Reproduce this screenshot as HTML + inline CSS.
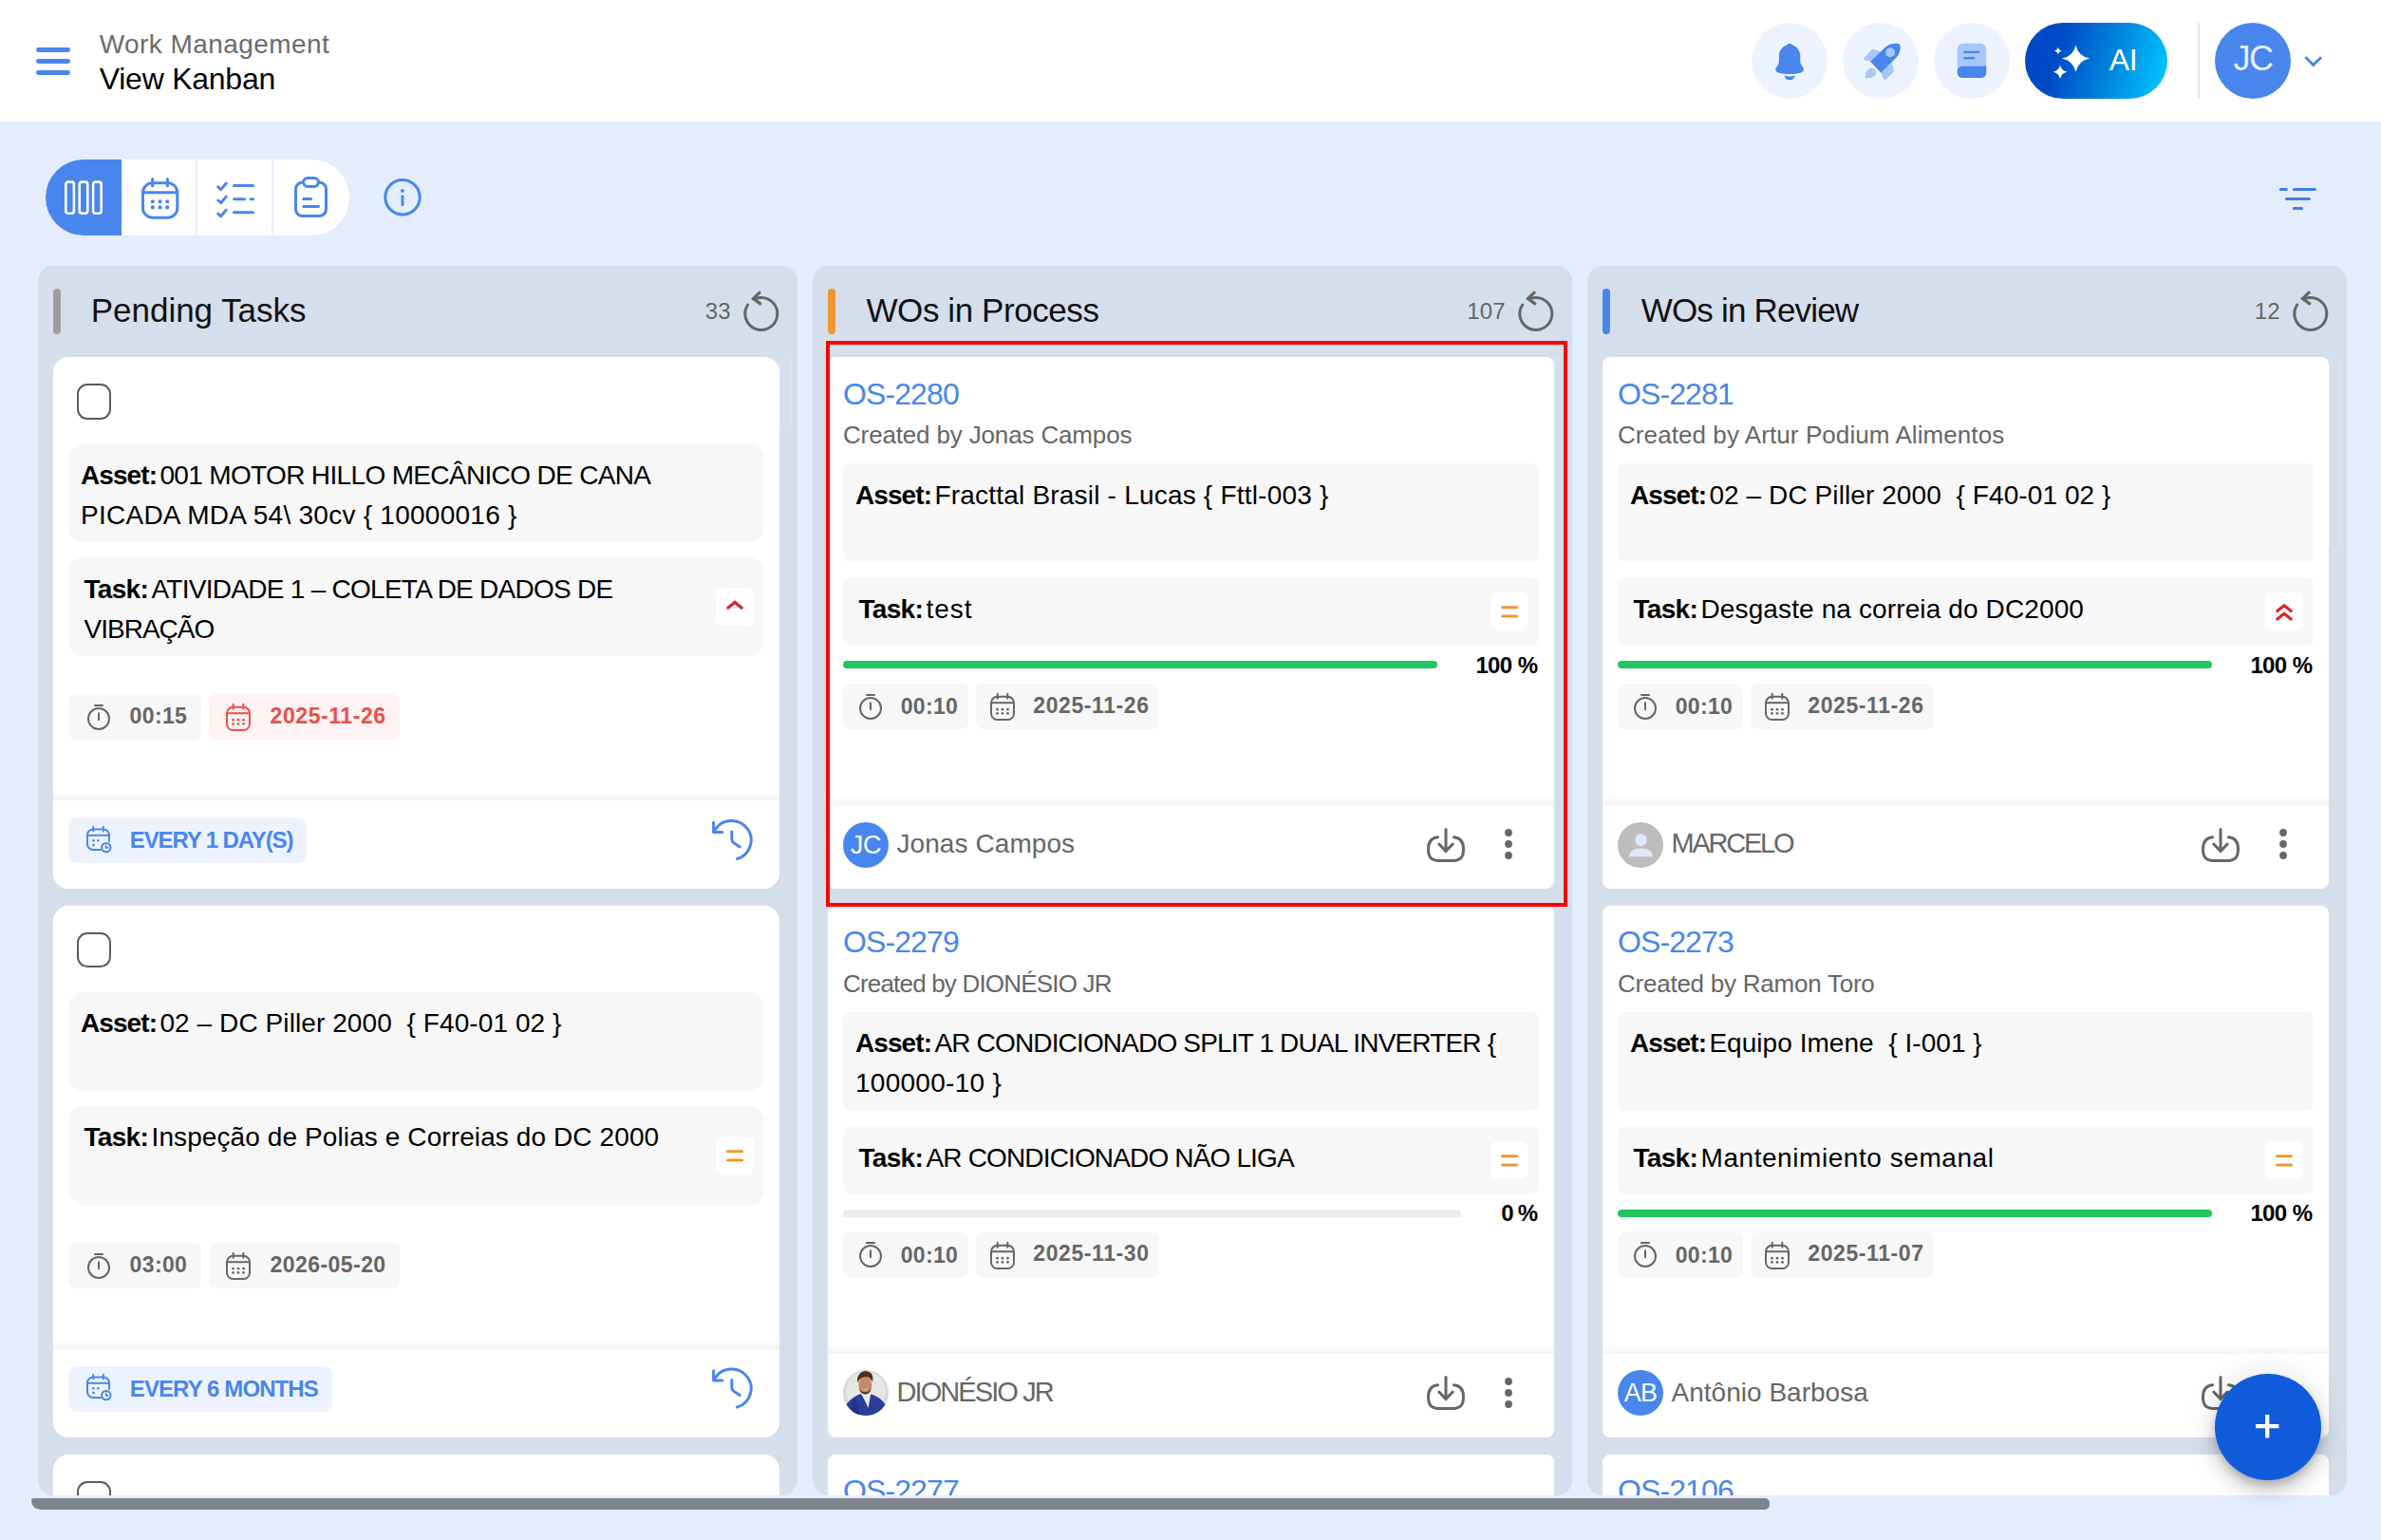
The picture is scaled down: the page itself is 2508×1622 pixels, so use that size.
<!DOCTYPE html>
<html lang="en"><head><meta charset="utf-8"><title>View Kanban</title>
<style>
html,body{margin:0;padding:0}
body{width:2508px;height:1622px;overflow:hidden;position:relative;background:#e4edfd;font-family:"Liberation Sans", Arimo, Arial, Helvetica, sans-serif;-webkit-font-smoothing:antialiased}
</style></head><body>
<div style="position:absolute;left:0;top:0;width:2508px;height:1574.5px;overflow:hidden"><div style="position:absolute;left:40px;top:280px;width:800px;height:1294.5px;background:#d5dfec;border-radius:16px"></div><div style="position:absolute;left:856px;top:280px;width:800px;height:1294.5px;background:#d5dfec;border-radius:16px"></div><div style="position:absolute;left:1672px;top:280px;width:800px;height:1294.5px;background:#d5dfec;border-radius:16px"></div><div style="position:absolute;left:56px;top:304px;width:8px;height:48px;background:#9e9e9e;border-radius:4px;"></div><span style="position:absolute;left:95.70px;top:305.20px;font-size:35px;line-height:44px;letter-spacing:-0.013px;color:#111;white-space:pre;">Pending Tasks</span><span style="position:absolute;right:1738.36px;top:312.70px;font-size:24px;line-height:30px;letter-spacing:0.141px;color:#666;white-space:pre;">33</span><svg style="position:absolute;left:0px;top:0px;overflow:visible;" width="10" height="10" viewBox="0 0 10 10" fill="none"><path d="M800.8 313.5 A17 17 0 1 1 787.71 320.99" stroke="#666" stroke-width="3" stroke-linecap="round"/><path d="M800.0999999999999 308.1 L793.5 314.5 L800.8 319.9" stroke="#666" stroke-width="3.200" stroke-linecap="round" stroke-linejoin="miter"/><path d="M793.5 314.5 L800.8 313.5" stroke="#666" stroke-width="3" stroke-linecap="round"/></svg><div style="position:absolute;left:872px;top:304px;width:8px;height:48px;background:#f0982f;border-radius:4px;"></div><span style="position:absolute;left:912.50px;top:305.20px;font-size:35px;line-height:44px;letter-spacing:-0.423px;color:#111;white-space:pre;">WOs in Process</span><span style="position:absolute;right:922.36px;top:312.70px;font-size:24px;line-height:30px;letter-spacing:0.141px;color:#666;white-space:pre;">107</span><svg style="position:absolute;left:0px;top:0px;overflow:visible;" width="10" height="10" viewBox="0 0 10 10" fill="none"><path d="M1616.8 313.5 A17 17 0 1 1 1603.71 320.99" stroke="#666" stroke-width="3" stroke-linecap="round"/><path d="M1616.1 308.1 L1609.5 314.5 L1616.8 319.9" stroke="#666" stroke-width="3.200" stroke-linecap="round" stroke-linejoin="miter"/><path d="M1609.5 314.5 L1616.8 313.5" stroke="#666" stroke-width="3" stroke-linecap="round"/></svg><div style="position:absolute;left:1688px;top:304px;width:8px;height:48px;background:#4886ee;border-radius:4px;"></div><span style="position:absolute;left:1728.70px;top:305.20px;font-size:35px;line-height:44px;letter-spacing:-0.814px;color:#111;white-space:pre;">WOs in Review</span><span style="position:absolute;right:106.36px;top:312.70px;font-size:24px;line-height:30px;letter-spacing:0.141px;color:#666;white-space:pre;">12</span><svg style="position:absolute;left:0px;top:0px;overflow:visible;" width="10" height="10" viewBox="0 0 10 10" fill="none"><path d="M2432.8 313.5 A17 17 0 1 1 2419.71 320.99" stroke="#666" stroke-width="3" stroke-linecap="round"/><path d="M2432.1000000000004 308.1 L2425.5 314.5 L2432.8 319.9" stroke="#666" stroke-width="3.200" stroke-linecap="round" stroke-linejoin="miter"/><path d="M2425.5 314.5 L2432.8 313.5" stroke="#666" stroke-width="3" stroke-linecap="round"/></svg><div style="position:absolute;left:56px;top:376px;width:764.500px;height:560px;background:#fff;border-radius:16px"></div><div style="position:absolute;left:81.4px;top:404px;width:31.600px;height:33.600px;border:2.300px solid #5c5c5c;border-radius:11px"></div><div style="position:absolute;left:72px;top:467px;width:732.5px;height:104px;background:#f7f7f7;border-radius:16px;"></div><span style="position:absolute;left:85.00px;top:482.80px;font-size:28px;line-height:35px;letter-spacing:-0.922px;color:#000;font-weight:bold;white-space:pre;">Asset:</span><span style="position:absolute;left:168.40px;top:482.80px;font-size:28px;line-height:35px;letter-spacing:-0.652px;color:#000;white-space:pre;">001 MOTOR HILLO MECÂNICO DE CANA</span><span style="position:absolute;left:85.00px;top:524.80px;font-size:28px;line-height:35px;letter-spacing:0.257px;color:#000;white-space:pre;">PICADA MDA 54\ 30cv { 10000016 }</span><div style="position:absolute;left:72px;top:587px;width:732.5px;height:104px;background:#f7f7f7;border-radius:16px;"></div><span style="position:absolute;left:88.50px;top:602.70px;font-size:28px;line-height:35px;letter-spacing:-0.713px;color:#000;font-weight:bold;white-space:pre;">Task:</span><span style="position:absolute;left:159.50px;top:602.70px;font-size:28px;line-height:35px;letter-spacing:-0.727px;color:#000;white-space:pre;">ATIVIDADE 1 – COLETA DE DADOS DE</span><span style="position:absolute;left:88.50px;top:644.70px;font-size:28px;line-height:35px;letter-spacing:-0.994px;color:#000;white-space:pre;">VIBRAÇÃO</span><div style="position:absolute;left:753.8px;top:619px;width:40px;height:40px;background:#fff;border-radius:8px;"></div><svg style="position:absolute;left:753.8px;top:619px;overflow:visible;" width="40" height="40" viewBox="0 0 40 40" fill="none"><path d="M12.800 21.300L20 15.400L27.200 21.300" stroke="#d7282f" stroke-width="3.200" stroke-linecap="round" stroke-linejoin="miter"/></svg><div style="position:absolute;left:72px;top:731px;width:139.5px;height:48px;background:#f7f7f7;border-radius:8px;"></div><svg style="position:absolute;left:92px;top:742px;overflow:visible;" width="24" height="27" viewBox="0 0 24 27" fill="none"><circle cx="12" cy="15" r="11" stroke="#666" stroke-width="2"/><path d="M8 1H16" stroke="#666" stroke-width="2" stroke-linecap="round"/><path d="M12 9.300V16.300" stroke="#666" stroke-width="2" stroke-linecap="round"/></svg><span style="position:absolute;left:136.60px;top:740.30px;font-size:23px;line-height:29px;letter-spacing:0.374px;color:#666;font-weight:bold;white-space:pre;">00:15</span><div style="position:absolute;left:219.70000000000002px;top:731px;width:201.0px;height:48px;background:#fff2f2;border-radius:8px;"></div><svg style="position:absolute;left:238.4px;top:741px;overflow:visible;" width="26" height="29" viewBox="0 0 26 29" fill="none"><rect x="1" y="3.800" width="24" height="24.200" rx="6.500" stroke="#e94f4f" stroke-width="2"/><path d="M7.700 .8V5.800M18.300 .8V5.800" stroke="#e94f4f" stroke-width="2" stroke-linecap="round"/><path d="M1 10.200H25" stroke="#e94f4f" stroke-width="2"/><circle cx="7.5" cy="17.2" r="1.350" fill="#e94f4f"/><circle cx="13" cy="17.2" r="1.350" fill="#e94f4f"/><circle cx="18.5" cy="17.2" r="1.350" fill="#e94f4f"/><circle cx="7.5" cy="21.4" r="1.350" fill="#e94f4f"/><circle cx="13" cy="21.4" r="1.350" fill="#e94f4f"/><circle cx="18.5" cy="21.4" r="1.350" fill="#e94f4f"/></svg><span style="position:absolute;left:284.60px;top:740.30px;font-size:23px;line-height:29px;letter-spacing:0.561px;color:#e94f4f;font-weight:bold;white-space:pre;">2025-11-26</span><div style="position:absolute;left:56px;top:832px;width:764.5px;height:11px;background:linear-gradient(to bottom,rgba(0,0,0,0),rgba(0,0,0,0.012) 40%,rgba(0,0,0,0.048))"></div><div style="position:absolute;left:72px;top:861px;width:251.0px;height:48px;background:#edf3fe;border-radius:9px;"></div><svg style="position:absolute;left:90.8px;top:869.8px;overflow:visible;" width="26" height="28" viewBox="0 0 26 28" fill="none"><path d="M24 16V9.500a6 6 0 0 0-6-6H7a6 6 0 0 0-6 6V19a6 6 0 0 0 6 6h8" stroke="#4886ee" stroke-width="2" stroke-linecap="round"/><path d="M7.200 .8V5.500M17.800 .8V5.500" stroke="#4886ee" stroke-width="2" stroke-linecap="round"/><path d="M1 9.800H24" stroke="#4886ee" stroke-width="2"/><circle cx="7.500" cy="15.300" r="1.300" fill="#4886ee"/><circle cx="12.300" cy="15.300" r="1.300" fill="#4886ee"/><circle cx="7.500" cy="20" r="1.300" fill="#4886ee"/><circle cx="20.800" cy="22.600" r="4.700" stroke="#4886ee" stroke-width="2"/><path d="M20.600 20.400V22.900H22.800" stroke="#4886ee" stroke-width="1.600" stroke-linecap="round" stroke-linejoin="round"/></svg><span style="position:absolute;left:136.80px;top:870.30px;font-size:24px;line-height:30px;letter-spacing:-1.121px;color:#4886ee;font-weight:bold;white-space:pre;">EVERY 1 DAY(S)</span><svg style="position:absolute;left:0px;top:0px;overflow:visible;" width="10" height="10" viewBox="0 0 10 10" fill="none"><path d="M753.0 874.5 A20.5 20.5 0 1 1 776.4 904.5999999999999" stroke="#4886ee" stroke-width="3" stroke-linecap="round"/><path d="M751.5999999999999 866.3 V876.5 H760.9" stroke="#4886ee" stroke-width="3" stroke-linecap="round" stroke-linejoin="round"/><path d="M770.8 875.9 V884.0999999999999 Q770.8 886.4 772.8 887.6999999999999 L779.3 892.0" stroke="#4886ee" stroke-width="3" stroke-linecap="round" stroke-linejoin="round"/></svg><div style="position:absolute;left:56px;top:953.5px;width:764.500px;height:560px;background:#fff;border-radius:16px"></div><div style="position:absolute;left:81.4px;top:981.5px;width:31.600px;height:33.600px;border:2.300px solid #5c5c5c;border-radius:11px"></div><div style="position:absolute;left:72px;top:1044.5px;width:732.5px;height:104px;background:#f7f7f7;border-radius:16px;"></div><span style="position:absolute;left:85.00px;top:1060.30px;font-size:28px;line-height:35px;letter-spacing:-0.922px;color:#000;font-weight:bold;white-space:pre;">Asset:</span><span style="position:absolute;left:168.40px;top:1060.30px;font-size:28px;line-height:35px;letter-spacing:0.085px;color:#000;white-space:pre;">02 – DC Piller 2000  { F40-01 02 }</span><div style="position:absolute;left:72px;top:1164.5px;width:732.5px;height:104px;background:#f7f7f7;border-radius:16px;"></div><span style="position:absolute;left:88.50px;top:1180.20px;font-size:28px;line-height:35px;letter-spacing:-0.713px;color:#000;font-weight:bold;white-space:pre;">Task:</span><span style="position:absolute;left:159.50px;top:1180.20px;font-size:28px;line-height:35px;letter-spacing:0.100px;color:#000;white-space:pre;">Inspeção de Polias e Correias do DC 2000</span><div style="position:absolute;left:753.8px;top:1196.5px;width:40px;height:40px;background:#fff;border-radius:8px;"></div><svg style="position:absolute;left:753.8px;top:1196.5px;overflow:visible;" width="40" height="40" viewBox="0 0 40 40" fill="none"><path d="M12.500 15.800H27.500M12.500 25H27.500" stroke="#f0962e" stroke-width="3" stroke-linecap="round"/></svg><div style="position:absolute;left:72px;top:1308.5px;width:139.5px;height:48px;background:#f7f7f7;border-radius:8px;"></div><svg style="position:absolute;left:92px;top:1319.5px;overflow:visible;" width="24" height="27" viewBox="0 0 24 27" fill="none"><circle cx="12" cy="15" r="11" stroke="#666" stroke-width="2"/><path d="M8 1H16" stroke="#666" stroke-width="2" stroke-linecap="round"/><path d="M12 9.300V16.300" stroke="#666" stroke-width="2" stroke-linecap="round"/></svg><span style="position:absolute;left:136.60px;top:1317.80px;font-size:23px;line-height:29px;letter-spacing:0.374px;color:#666;font-weight:bold;white-space:pre;">03:00</span><div style="position:absolute;left:219.70000000000002px;top:1308.5px;width:201.0px;height:48px;background:#f7f7f7;border-radius:8px;"></div><svg style="position:absolute;left:238.4px;top:1318.5px;overflow:visible;" width="26" height="29" viewBox="0 0 26 29" fill="none"><rect x="1" y="3.800" width="24" height="24.200" rx="6.500" stroke="#666" stroke-width="2"/><path d="M7.700 .8V5.800M18.300 .8V5.800" stroke="#666" stroke-width="2" stroke-linecap="round"/><path d="M1 10.200H25" stroke="#666" stroke-width="2"/><circle cx="7.5" cy="17.2" r="1.350" fill="#666"/><circle cx="13" cy="17.2" r="1.350" fill="#666"/><circle cx="18.5" cy="17.2" r="1.350" fill="#666"/><circle cx="7.5" cy="21.4" r="1.350" fill="#666"/><circle cx="13" cy="21.4" r="1.350" fill="#666"/><circle cx="18.5" cy="21.4" r="1.350" fill="#666"/></svg><span style="position:absolute;left:284.60px;top:1317.80px;font-size:23px;line-height:29px;letter-spacing:0.434px;color:#666;font-weight:bold;white-space:pre;">2026-05-20</span><div style="position:absolute;left:56px;top:1409.5px;width:764.5px;height:11px;background:linear-gradient(to bottom,rgba(0,0,0,0),rgba(0,0,0,0.012) 40%,rgba(0,0,0,0.048))"></div><div style="position:absolute;left:72px;top:1438.5px;width:277.5px;height:48px;background:#edf3fe;border-radius:9px;"></div><svg style="position:absolute;left:90.8px;top:1447.3px;overflow:visible;" width="26" height="28" viewBox="0 0 26 28" fill="none"><path d="M24 16V9.500a6 6 0 0 0-6-6H7a6 6 0 0 0-6 6V19a6 6 0 0 0 6 6h8" stroke="#4886ee" stroke-width="2" stroke-linecap="round"/><path d="M7.200 .8V5.500M17.800 .8V5.500" stroke="#4886ee" stroke-width="2" stroke-linecap="round"/><path d="M1 9.800H24" stroke="#4886ee" stroke-width="2"/><circle cx="7.500" cy="15.300" r="1.300" fill="#4886ee"/><circle cx="12.300" cy="15.300" r="1.300" fill="#4886ee"/><circle cx="7.500" cy="20" r="1.300" fill="#4886ee"/><circle cx="20.800" cy="22.600" r="4.700" stroke="#4886ee" stroke-width="2"/><path d="M20.600 20.400V22.900H22.800" stroke="#4886ee" stroke-width="1.600" stroke-linecap="round" stroke-linejoin="round"/></svg><span style="position:absolute;left:136.80px;top:1447.80px;font-size:24px;line-height:30px;letter-spacing:-0.901px;color:#4886ee;font-weight:bold;white-space:pre;">EVERY 6 MONTHS</span><svg style="position:absolute;left:0px;top:0px;overflow:visible;" width="10" height="10" viewBox="0 0 10 10" fill="none"><path d="M753.0 1452.0 A20.5 20.5 0 1 1 776.4 1482.1" stroke="#4886ee" stroke-width="3" stroke-linecap="round"/><path d="M751.5999999999999 1443.8 V1454.0 H760.9" stroke="#4886ee" stroke-width="3" stroke-linecap="round" stroke-linejoin="round"/><path d="M770.8 1453.3999999999999 V1461.6 Q770.8 1463.8999999999999 772.8 1465.2 L779.3 1469.5" stroke="#4886ee" stroke-width="3" stroke-linecap="round" stroke-linejoin="round"/></svg><div style="position:absolute;left:56px;top:1531.5px;width:764.500px;height:560px;background:#fff;border-radius:16px"></div><div style="position:absolute;left:81.4px;top:1559.5px;width:31.600px;height:33.600px;border:2.300px solid #5c5c5c;border-radius:11px"></div><div style="position:absolute;left:72px;top:1622.5px;width:732.5px;height:104px;background:#f7f7f7;border-radius:16px;"></div><span style="position:absolute;left:85.00px;top:1638.30px;font-size:28px;line-height:35px;letter-spacing:-0.922px;color:#000;font-weight:bold;white-space:pre;">Asset:</span><span style="position:absolute;left:168.40px;top:1638.30px;font-size:28px;line-height:35px;letter-spacing:-1.218px;color:#000;white-space:pre;">-</span><div style="position:absolute;left:72px;top:1742.5px;width:732.5px;height:104px;background:#f7f7f7;border-radius:16px;"></div><span style="position:absolute;left:88.50px;top:1758.20px;font-size:28px;line-height:35px;letter-spacing:-0.713px;color:#000;font-weight:bold;white-space:pre;">Task:</span><span style="position:absolute;left:159.50px;top:1758.20px;font-size:28px;line-height:35px;letter-spacing:-1.218px;color:#000;white-space:pre;">-</span><div style="position:absolute;left:753.8px;top:1774.5px;width:40px;height:40px;background:#fff;border-radius:8px;"></div><svg style="position:absolute;left:753.8px;top:1774.5px;overflow:visible;" width="40" height="40" viewBox="0 0 40 40" fill="none"><path d="M12.500 15.800H27.500M12.500 25H27.500" stroke="#f0962e" stroke-width="3" stroke-linecap="round"/></svg><div style="position:absolute;left:72px;top:1886.5px;width:139.5px;height:48px;background:#f7f7f7;border-radius:8px;"></div><svg style="position:absolute;left:92px;top:1897.5px;overflow:visible;" width="24" height="27" viewBox="0 0 24 27" fill="none"><circle cx="12" cy="15" r="11" stroke="#666" stroke-width="2"/><path d="M8 1H16" stroke="#666" stroke-width="2" stroke-linecap="round"/><path d="M12 9.300V16.300" stroke="#666" stroke-width="2" stroke-linecap="round"/></svg><span style="position:absolute;left:136.60px;top:1895.80px;font-size:23px;line-height:29px;letter-spacing:0.374px;color:#666;font-weight:bold;white-space:pre;">00:10</span><div style="position:absolute;left:219.70000000000002px;top:1886.5px;width:201.0px;height:48px;background:#f7f7f7;border-radius:8px;"></div><svg style="position:absolute;left:238.4px;top:1896.5px;overflow:visible;" width="26" height="29" viewBox="0 0 26 29" fill="none"><rect x="1" y="3.800" width="24" height="24.200" rx="6.500" stroke="#666" stroke-width="2"/><path d="M7.700 .8V5.800M18.300 .8V5.800" stroke="#666" stroke-width="2" stroke-linecap="round"/><path d="M1 10.200H25" stroke="#666" stroke-width="2"/><circle cx="7.5" cy="17.2" r="1.350" fill="#666"/><circle cx="13" cy="17.2" r="1.350" fill="#666"/><circle cx="18.5" cy="17.2" r="1.350" fill="#666"/><circle cx="7.5" cy="21.4" r="1.350" fill="#666"/><circle cx="13" cy="21.4" r="1.350" fill="#666"/><circle cx="18.5" cy="21.4" r="1.350" fill="#666"/></svg><span style="position:absolute;left:284.60px;top:1895.80px;font-size:23px;line-height:29px;letter-spacing:0.434px;color:#666;font-weight:bold;white-space:pre;">2026-01-01</span><div style="position:absolute;left:56px;top:1987.5px;width:764.5px;height:11px;background:linear-gradient(to bottom,rgba(0,0,0,0),rgba(0,0,0,0.012) 40%,rgba(0,0,0,0.048))"></div><div style="position:absolute;left:72px;top:2016.5px;width:251.0px;height:48px;background:#edf3fe;border-radius:9px;"></div><svg style="position:absolute;left:90.8px;top:2025.3px;overflow:visible;" width="26" height="28" viewBox="0 0 26 28" fill="none"><path d="M24 16V9.500a6 6 0 0 0-6-6H7a6 6 0 0 0-6 6V19a6 6 0 0 0 6 6h8" stroke="#4886ee" stroke-width="2" stroke-linecap="round"/><path d="M7.200 .8V5.500M17.800 .8V5.500" stroke="#4886ee" stroke-width="2" stroke-linecap="round"/><path d="M1 9.800H24" stroke="#4886ee" stroke-width="2"/><circle cx="7.500" cy="15.300" r="1.300" fill="#4886ee"/><circle cx="12.300" cy="15.300" r="1.300" fill="#4886ee"/><circle cx="7.500" cy="20" r="1.300" fill="#4886ee"/><circle cx="20.800" cy="22.600" r="4.700" stroke="#4886ee" stroke-width="2"/><path d="M20.600 20.400V22.900H22.800" stroke="#4886ee" stroke-width="1.600" stroke-linecap="round" stroke-linejoin="round"/></svg><span style="position:absolute;left:136.80px;top:2025.80px;font-size:24px;line-height:30px;letter-spacing:-1.121px;color:#4886ee;font-weight:bold;white-space:pre;">EVERY 1 DAY(S)</span><svg style="position:absolute;left:0px;top:0px;overflow:visible;" width="10" height="10" viewBox="0 0 10 10" fill="none"><path d="M753.0 2030.0 A20.5 20.5 0 1 1 776.4 2060.1" stroke="#4886ee" stroke-width="3" stroke-linecap="round"/><path d="M751.5999999999999 2021.8 V2032.0 H760.9" stroke="#4886ee" stroke-width="3" stroke-linecap="round" stroke-linejoin="round"/><path d="M770.8 2031.3999999999999 V2039.6 Q770.8 2041.8999999999999 772.8 2043.2 L779.3 2047.5" stroke="#4886ee" stroke-width="3" stroke-linecap="round" stroke-linejoin="round"/></svg><div style="position:absolute;left:872px;top:376px;width:764.500px;height:560px;background:#fff;border-radius:8px"></div><span style="position:absolute;left:888.00px;top:394.90px;font-size:32px;line-height:40px;letter-spacing:-0.897px;color:#4886ee;white-space:pre;">OS-2280</span><span style="position:absolute;left:888.00px;top:442.10px;font-size:26px;line-height:32px;letter-spacing:-0.154px;color:#666;white-space:pre;">Created by Jonas Campos</span><div style="position:absolute;left:888px;top:488px;width:732.5px;height:104px;background:#f7f7f7;border-radius:8px;"></div><span style="position:absolute;left:901.00px;top:503.70px;font-size:28px;line-height:35px;letter-spacing:-0.922px;color:#000;font-weight:bold;white-space:pre;">Asset:</span><span style="position:absolute;left:984.40px;top:503.70px;font-size:28px;line-height:35px;letter-spacing:0.206px;color:#000;white-space:pre;">Fracttal Brasil - Lucas { Fttl-003 }</span><div style="position:absolute;left:888px;top:608px;width:732.5px;height:72px;background:#f7f7f7;border-radius:8px;"></div><span style="position:absolute;left:904.50px;top:624.00px;font-size:28px;line-height:35px;letter-spacing:-0.713px;color:#000;font-weight:bold;white-space:pre;">Task:</span><span style="position:absolute;left:975.50px;top:624.00px;font-size:28px;line-height:35px;letter-spacing:0.981px;color:#000;white-space:pre;">test</span><div style="position:absolute;left:1569.5px;top:624px;width:40px;height:40px;background:#fff;border-radius:8px;"></div><svg style="position:absolute;left:1569.5px;top:624px;overflow:visible;" width="40" height="40" viewBox="0 0 40 40" fill="none"><path d="M12.500 15.800H27.500M12.500 25H27.500" stroke="#f0962e" stroke-width="3" stroke-linecap="round"/></svg><div style="position:absolute;left:888px;top:696px;width:625.5px;height:8px;background:#22c55e;border-radius:4px;"></div><span style="position:absolute;right:888.61px;top:685.70px;font-size:24px;line-height:30px;letter-spacing:-0.609px;color:#000;font-weight:bold;white-space:pre;">100 %</span><div style="position:absolute;left:888px;top:720px;width:131.5px;height:48px;background:#f7f7f7;border-radius:8px;"></div><svg style="position:absolute;left:904.7px;top:730.6px;overflow:visible;" width="24" height="27" viewBox="0 0 24 27" fill="none"><circle cx="12" cy="15" r="11" stroke="#666" stroke-width="2"/><path d="M8 1H16" stroke="#666" stroke-width="2" stroke-linecap="round"/><path d="M12 9.300V16.300" stroke="#666" stroke-width="2" stroke-linecap="round"/></svg><span style="position:absolute;left:948.70px;top:730.10px;font-size:23px;line-height:29px;letter-spacing:0.334px;color:#666;font-weight:bold;white-space:pre;">00:10</span><div style="position:absolute;left:1027.5px;top:720px;width:193.5px;height:48px;background:#f7f7f7;border-radius:8px;"></div><svg style="position:absolute;left:1043.3px;top:730px;overflow:visible;" width="26" height="29" viewBox="0 0 26 29" fill="none"><rect x="1" y="3.800" width="24" height="24.200" rx="6.500" stroke="#666" stroke-width="2"/><path d="M7.700 .8V5.800M18.300 .8V5.800" stroke="#666" stroke-width="2" stroke-linecap="round"/><path d="M1 10.200H25" stroke="#666" stroke-width="2"/><circle cx="7.5" cy="17.2" r="1.350" fill="#666"/><circle cx="13" cy="17.2" r="1.350" fill="#666"/><circle cx="18.5" cy="17.2" r="1.350" fill="#666"/><circle cx="7.5" cy="21.4" r="1.350" fill="#666"/><circle cx="13" cy="21.4" r="1.350" fill="#666"/><circle cx="18.5" cy="21.4" r="1.350" fill="#666"/></svg><span style="position:absolute;left:1088.30px;top:728.50px;font-size:23px;line-height:29px;letter-spacing:0.591px;color:#666;font-weight:bold;white-space:pre;">2025-11-26</span><div style="position:absolute;left:872px;top:837px;width:764.5px;height:11px;background:linear-gradient(to bottom,rgba(0,0,0,0),rgba(0,0,0,0.012) 40%,rgba(0,0,0,0.048))"></div><div style="position:absolute;left:888px;top:865.5px;width:48px;height:48px;border-radius:50%;background:#4886ee"></div><span style="position:absolute;left:895.76px;top:872.90px;font-size:27px;line-height:34px;letter-spacing:-0.258px;color:#fff;white-space:pre;">JC</span><span style="position:absolute;left:944.50px;top:871.20px;font-size:28px;line-height:35px;letter-spacing:0.076px;color:#666;white-space:pre;">Jonas Campos</span><svg style="position:absolute;left:1503.2px;top:871.5px;overflow:visible;" width="40" height="36" viewBox="0 0 40 36" fill="none"><path d="M11.500 9.800C4.500 10.300 1.500 14.300 1.500 22.500C1.500 31.300 5 34.500 14 34.500H26C35 34.500 38.500 31.300 38.500 22.500C38.500 14.300 35.500 10.300 28.500 9.800" stroke="#666" stroke-width="3" stroke-linecap="round"/><path d="M20 1.500V24.500M12.800 17L20 24.500L27.200 17" stroke="#666" stroke-width="3" stroke-linecap="round" stroke-linejoin="miter"/></svg><svg style="position:absolute;left:1584.9px;top:873.4px;overflow:visible;" width="8" height="32" viewBox="0 0 8 32" fill="none"><circle cx="4" cy="4" r="3.900" fill="#666"/><circle cx="4" cy="16" r="3.900" fill="#666"/><circle cx="4" cy="28" r="3.900" fill="#666"/></svg><div style="position:absolute;left:872px;top:953.5px;width:764.500px;height:560px;background:#fff;border-radius:8px"></div><span style="position:absolute;left:888.00px;top:972.40px;font-size:32px;line-height:40px;letter-spacing:-0.897px;color:#4886ee;white-space:pre;">OS-2279</span><span style="position:absolute;left:888.00px;top:1019.60px;font-size:26px;line-height:32px;letter-spacing:-0.815px;color:#666;white-space:pre;">Created by DIONÉSIO JR</span><div style="position:absolute;left:888px;top:1065.5px;width:732.5px;height:104px;background:#f7f7f7;border-radius:8px;"></div><span style="position:absolute;left:901.00px;top:1081.20px;font-size:28px;line-height:35px;letter-spacing:-0.922px;color:#000;font-weight:bold;white-space:pre;">Asset:</span><span style="position:absolute;left:984.40px;top:1081.20px;font-size:28px;line-height:35px;letter-spacing:-0.836px;color:#000;white-space:pre;">AR CONDICIONADO SPLIT 1 DUAL INVERTER {</span><span style="position:absolute;left:901.00px;top:1123.20px;font-size:28px;line-height:35px;letter-spacing:0.271px;color:#000;white-space:pre;">100000-10 }</span><div style="position:absolute;left:888px;top:1185.5px;width:732.5px;height:72px;background:#f7f7f7;border-radius:8px;"></div><span style="position:absolute;left:904.50px;top:1201.50px;font-size:28px;line-height:35px;letter-spacing:-0.713px;color:#000;font-weight:bold;white-space:pre;">Task:</span><span style="position:absolute;left:975.50px;top:1201.50px;font-size:28px;line-height:35px;letter-spacing:-0.846px;color:#000;white-space:pre;">AR CONDICIONADO NÃO LIGA</span><div style="position:absolute;left:1569.5px;top:1201.5px;width:40px;height:40px;background:#fff;border-radius:8px;"></div><svg style="position:absolute;left:1569.5px;top:1201.5px;overflow:visible;" width="40" height="40" viewBox="0 0 40 40" fill="none"><path d="M12.500 15.800H27.500M12.500 25H27.500" stroke="#f0962e" stroke-width="3" stroke-linecap="round"/></svg><div style="position:absolute;left:888px;top:1273.5px;width:651px;height:8px;background:#ebebeb;border-radius:4px;"></div><span style="position:absolute;right:889.29px;top:1263.20px;font-size:24px;line-height:30px;letter-spacing:-1.292px;color:#000;font-weight:bold;white-space:pre;">0 %</span><div style="position:absolute;left:888px;top:1297.5px;width:131.5px;height:48px;background:#f7f7f7;border-radius:8px;"></div><svg style="position:absolute;left:904.7px;top:1308.1px;overflow:visible;" width="24" height="27" viewBox="0 0 24 27" fill="none"><circle cx="12" cy="15" r="11" stroke="#666" stroke-width="2"/><path d="M8 1H16" stroke="#666" stroke-width="2" stroke-linecap="round"/><path d="M12 9.300V16.300" stroke="#666" stroke-width="2" stroke-linecap="round"/></svg><span style="position:absolute;left:948.70px;top:1307.60px;font-size:23px;line-height:29px;letter-spacing:0.334px;color:#666;font-weight:bold;white-space:pre;">00:10</span><div style="position:absolute;left:1027.5px;top:1297.5px;width:193.5px;height:48px;background:#f7f7f7;border-radius:8px;"></div><svg style="position:absolute;left:1043.3px;top:1307.5px;overflow:visible;" width="26" height="29" viewBox="0 0 26 29" fill="none"><rect x="1" y="3.800" width="24" height="24.200" rx="6.500" stroke="#666" stroke-width="2"/><path d="M7.700 .8V5.800M18.300 .8V5.800" stroke="#666" stroke-width="2" stroke-linecap="round"/><path d="M1 10.200H25" stroke="#666" stroke-width="2"/><circle cx="7.5" cy="17.2" r="1.350" fill="#666"/><circle cx="13" cy="17.2" r="1.350" fill="#666"/><circle cx="18.5" cy="17.2" r="1.350" fill="#666"/><circle cx="7.5" cy="21.4" r="1.350" fill="#666"/><circle cx="13" cy="21.4" r="1.350" fill="#666"/><circle cx="18.5" cy="21.4" r="1.350" fill="#666"/></svg><span style="position:absolute;left:1088.30px;top:1306.00px;font-size:23px;line-height:29px;letter-spacing:0.591px;color:#666;font-weight:bold;white-space:pre;">2025-11-30</span><div style="position:absolute;left:872px;top:1414.5px;width:764.5px;height:11px;background:linear-gradient(to bottom,rgba(0,0,0,0),rgba(0,0,0,0.012) 40%,rgba(0,0,0,0.048))"></div><div style="position:absolute;left:888px;top:1443.0px;width:48px;height:48px;border-radius:50%;overflow:hidden"><svg width="48" height="48" viewBox="0 0 48 48" style="display:block"><rect width="48" height="48" fill="#d5dad9"/><ellipse cx="24" cy="22" rx="21" ry="20" fill="#e3e7e6"/><path d="M1 41C5 32 12 27.500 19 25L23.500 31L29.500 25.500C38 28 44 33 48 43V48H0Z" fill="#2a3c9c"/><path d="M12 30C15 36 17 42 17.500 48H9C8 42 9 35 12 30Z" fill="#223184"/><path d="M18.800 24.500L23.600 33.500L26.500 40L29.200 25.500L26.500 22H20.500Z" fill="#e8ecf1"/><ellipse cx="23.300" cy="15.500" rx="7" ry="8.800" fill="#c8896a"/><path d="M15.200 13.500C13.800 5.500 19.500 .3 25 1.200C30.300 2 32.600 6.500 30.900 12.800C29.800 8.600 27 6.800 23 7.200C19 7.600 16.500 9.800 15.200 13.500Z" fill="#4e311d"/><path d="M16.800 18.500C18.500 24.800 28 24.800 29.900 18.500C29.300 22.800 27 25.600 23.400 25.600S17.500 22.800 16.800 18.500Z" fill="#5f3a24"/><path d="M20.500 20.200Q23.500 22.500 26.600 20.200Q23.500 21.100 20.500 20.200Z" fill="#fff"/></svg></div><span style="position:absolute;left:944.50px;top:1447.70px;font-size:29px;line-height:36px;letter-spacing:-1.911px;color:#666;white-space:pre;">DIONÉSIO JR</span><svg style="position:absolute;left:1503.2px;top:1449.0px;overflow:visible;" width="40" height="36" viewBox="0 0 40 36" fill="none"><path d="M11.500 9.800C4.500 10.300 1.500 14.300 1.500 22.500C1.500 31.300 5 34.500 14 34.500H26C35 34.500 38.500 31.300 38.500 22.500C38.500 14.300 35.500 10.300 28.500 9.800" stroke="#666" stroke-width="3" stroke-linecap="round"/><path d="M20 1.500V24.500M12.800 17L20 24.500L27.200 17" stroke="#666" stroke-width="3" stroke-linecap="round" stroke-linejoin="miter"/></svg><svg style="position:absolute;left:1584.9px;top:1450.9px;overflow:visible;" width="8" height="32" viewBox="0 0 8 32" fill="none"><circle cx="4" cy="4" r="3.900" fill="#666"/><circle cx="4" cy="16" r="3.900" fill="#666"/><circle cx="4" cy="28" r="3.900" fill="#666"/></svg><div style="position:absolute;left:872px;top:1531.5px;width:764.500px;height:560px;background:#fff;border-radius:8px"></div><span style="position:absolute;left:888.00px;top:1550.40px;font-size:32px;line-height:40px;letter-spacing:-0.897px;color:#4886ee;white-space:pre;">OS-2277</span><span style="position:absolute;left:888.00px;top:1597.60px;font-size:26px;line-height:32px;letter-spacing:-0.154px;color:#666;white-space:pre;">Created by Jonas Campos</span><div style="position:absolute;left:888px;top:1643.5px;width:732.5px;height:104px;background:#f7f7f7;border-radius:8px;"></div><span style="position:absolute;left:901.00px;top:1659.20px;font-size:28px;line-height:35px;letter-spacing:-0.922px;color:#000;font-weight:bold;white-space:pre;">Asset:</span><span style="position:absolute;left:984.40px;top:1659.20px;font-size:28px;line-height:35px;letter-spacing:-1.218px;color:#000;white-space:pre;">-</span><div style="position:absolute;left:888px;top:1763.5px;width:732.5px;height:72px;background:#f7f7f7;border-radius:8px;"></div><span style="position:absolute;left:904.50px;top:1779.50px;font-size:28px;line-height:35px;letter-spacing:-0.713px;color:#000;font-weight:bold;white-space:pre;">Task:</span><span style="position:absolute;left:975.50px;top:1779.50px;font-size:28px;line-height:35px;letter-spacing:-1.218px;color:#000;white-space:pre;">-</span><div style="position:absolute;left:1569.5px;top:1779.5px;width:40px;height:40px;background:#fff;border-radius:8px;"></div><svg style="position:absolute;left:1569.5px;top:1779.5px;overflow:visible;" width="40" height="40" viewBox="0 0 40 40" fill="none"><path d="M12.500 15.800H27.500M12.500 25H27.500" stroke="#f0962e" stroke-width="3" stroke-linecap="round"/></svg><div style="position:absolute;left:888px;top:1851.5px;width:651px;height:8px;background:#ebebeb;border-radius:4px;"></div><span style="position:absolute;right:889.29px;top:1841.20px;font-size:24px;line-height:30px;letter-spacing:-1.292px;color:#000;font-weight:bold;white-space:pre;">0 %</span><div style="position:absolute;left:888px;top:1875.5px;width:131.5px;height:48px;background:#f7f7f7;border-radius:8px;"></div><svg style="position:absolute;left:904.7px;top:1886.1px;overflow:visible;" width="24" height="27" viewBox="0 0 24 27" fill="none"><circle cx="12" cy="15" r="11" stroke="#666" stroke-width="2"/><path d="M8 1H16" stroke="#666" stroke-width="2" stroke-linecap="round"/><path d="M12 9.300V16.300" stroke="#666" stroke-width="2" stroke-linecap="round"/></svg><span style="position:absolute;left:948.70px;top:1885.60px;font-size:23px;line-height:29px;letter-spacing:0.334px;color:#666;font-weight:bold;white-space:pre;">00:10</span><div style="position:absolute;left:1027.5px;top:1875.5px;width:193.5px;height:48px;background:#f7f7f7;border-radius:8px;"></div><svg style="position:absolute;left:1043.3px;top:1885.5px;overflow:visible;" width="26" height="29" viewBox="0 0 26 29" fill="none"><rect x="1" y="3.800" width="24" height="24.200" rx="6.500" stroke="#666" stroke-width="2"/><path d="M7.700 .8V5.800M18.300 .8V5.800" stroke="#666" stroke-width="2" stroke-linecap="round"/><path d="M1 10.200H25" stroke="#666" stroke-width="2"/><circle cx="7.5" cy="17.2" r="1.350" fill="#666"/><circle cx="13" cy="17.2" r="1.350" fill="#666"/><circle cx="18.5" cy="17.2" r="1.350" fill="#666"/><circle cx="7.5" cy="21.4" r="1.350" fill="#666"/><circle cx="13" cy="21.4" r="1.350" fill="#666"/><circle cx="18.5" cy="21.4" r="1.350" fill="#666"/></svg><span style="position:absolute;left:1088.30px;top:1884.00px;font-size:23px;line-height:29px;letter-spacing:0.591px;color:#666;font-weight:bold;white-space:pre;">2025-11-30</span><div style="position:absolute;left:872px;top:1992.5px;width:764.5px;height:11px;background:linear-gradient(to bottom,rgba(0,0,0,0),rgba(0,0,0,0.012) 40%,rgba(0,0,0,0.048))"></div><svg style="position:absolute;left:888px;top:2021.0px;overflow:visible;" width="48" height="48" viewBox="0 0 48 48" fill="none"><circle cx="24" cy="24" r="24" fill="#bdbdbd"/><circle cx="24.400" cy="18.600" r="6.300" fill="#dce8fc"/><path d="M12 36.200C12 30.500 17 27.500 24.400 27.500S36.800 30.500 36.800 36.200Z" fill="#dce8fc"/></svg><span style="position:absolute;left:944.50px;top:2026.70px;font-size:28px;line-height:35px;letter-spacing:-1.578px;color:#666;white-space:pre;">-</span><svg style="position:absolute;left:1503.2px;top:2027.0px;overflow:visible;" width="40" height="36" viewBox="0 0 40 36" fill="none"><path d="M11.500 9.800C4.500 10.300 1.500 14.300 1.500 22.500C1.500 31.300 5 34.500 14 34.500H26C35 34.500 38.500 31.300 38.500 22.500C38.500 14.300 35.500 10.300 28.500 9.800" stroke="#666" stroke-width="3" stroke-linecap="round"/><path d="M20 1.500V24.500M12.800 17L20 24.500L27.200 17" stroke="#666" stroke-width="3" stroke-linecap="round" stroke-linejoin="miter"/></svg><svg style="position:absolute;left:1584.9px;top:2028.9px;overflow:visible;" width="8" height="32" viewBox="0 0 8 32" fill="none"><circle cx="4" cy="4" r="3.900" fill="#666"/><circle cx="4" cy="16" r="3.900" fill="#666"/><circle cx="4" cy="28" r="3.900" fill="#666"/></svg><div style="position:absolute;left:1688px;top:376px;width:764.500px;height:560px;background:#fff;border-radius:8px"></div><span style="position:absolute;left:1704.00px;top:394.90px;font-size:32px;line-height:40px;letter-spacing:-0.897px;color:#4886ee;white-space:pre;">OS-2281</span><span style="position:absolute;left:1704.00px;top:442.10px;font-size:26px;line-height:32px;letter-spacing:0.079px;color:#666;white-space:pre;">Created by Artur Podium Alimentos</span><div style="position:absolute;left:1704px;top:488px;width:732.5px;height:104px;background:#f7f7f7;border-radius:8px;"></div><span style="position:absolute;left:1717.00px;top:503.70px;font-size:28px;line-height:35px;letter-spacing:-0.922px;color:#000;font-weight:bold;white-space:pre;">Asset:</span><span style="position:absolute;left:1800.40px;top:503.70px;font-size:28px;line-height:35px;letter-spacing:0.085px;color:#000;white-space:pre;">02 – DC Piller 2000  { F40-01 02 }</span><div style="position:absolute;left:1704px;top:608px;width:732.5px;height:72px;background:#f7f7f7;border-radius:8px;"></div><span style="position:absolute;left:1720.50px;top:624.00px;font-size:28px;line-height:35px;letter-spacing:-0.713px;color:#000;font-weight:bold;white-space:pre;">Task:</span><span style="position:absolute;left:1791.50px;top:624.00px;font-size:28px;line-height:35px;letter-spacing:0.121px;color:#000;white-space:pre;">Desgaste na correia do DC2000</span><div style="position:absolute;left:2385.5px;top:624px;width:40px;height:40px;background:#fff;border-radius:8px;"></div><svg style="position:absolute;left:2385.5px;top:624px;overflow:visible;" width="40" height="40" viewBox="0 0 40 40" fill="none"><path d="M12.800 19.600L20 13.700L27.200 19.600M12.800 28.100L20 22.200L27.200 28.100" stroke="#d7282f" stroke-width="3.200" stroke-linecap="round" stroke-linejoin="miter"/></svg><div style="position:absolute;left:1704px;top:696px;width:625.5px;height:8px;background:#22c55e;border-radius:4px;"></div><span style="position:absolute;right:72.61px;top:685.70px;font-size:24px;line-height:30px;letter-spacing:-0.609px;color:#000;font-weight:bold;white-space:pre;">100 %</span><div style="position:absolute;left:1704px;top:720px;width:131.5px;height:48px;background:#f7f7f7;border-radius:8px;"></div><svg style="position:absolute;left:1720.7px;top:730.6px;overflow:visible;" width="24" height="27" viewBox="0 0 24 27" fill="none"><circle cx="12" cy="15" r="11" stroke="#666" stroke-width="2"/><path d="M8 1H16" stroke="#666" stroke-width="2" stroke-linecap="round"/><path d="M12 9.300V16.300" stroke="#666" stroke-width="2" stroke-linecap="round"/></svg><span style="position:absolute;left:1764.70px;top:730.10px;font-size:23px;line-height:29px;letter-spacing:0.334px;color:#666;font-weight:bold;white-space:pre;">00:10</span><div style="position:absolute;left:1843.5px;top:720px;width:193.5px;height:48px;background:#f7f7f7;border-radius:8px;"></div><svg style="position:absolute;left:1859.3px;top:730px;overflow:visible;" width="26" height="29" viewBox="0 0 26 29" fill="none"><rect x="1" y="3.800" width="24" height="24.200" rx="6.500" stroke="#666" stroke-width="2"/><path d="M7.700 .8V5.800M18.300 .8V5.800" stroke="#666" stroke-width="2" stroke-linecap="round"/><path d="M1 10.200H25" stroke="#666" stroke-width="2"/><circle cx="7.5" cy="17.2" r="1.350" fill="#666"/><circle cx="13" cy="17.2" r="1.350" fill="#666"/><circle cx="18.5" cy="17.2" r="1.350" fill="#666"/><circle cx="7.5" cy="21.4" r="1.350" fill="#666"/><circle cx="13" cy="21.4" r="1.350" fill="#666"/><circle cx="18.5" cy="21.4" r="1.350" fill="#666"/></svg><span style="position:absolute;left:1904.30px;top:728.50px;font-size:23px;line-height:29px;letter-spacing:0.591px;color:#666;font-weight:bold;white-space:pre;">2025-11-26</span><div style="position:absolute;left:1688px;top:837px;width:764.5px;height:11px;background:linear-gradient(to bottom,rgba(0,0,0,0),rgba(0,0,0,0.012) 40%,rgba(0,0,0,0.048))"></div><svg style="position:absolute;left:1704px;top:865.5px;overflow:visible;" width="48" height="48" viewBox="0 0 48 48" fill="none"><circle cx="24" cy="24" r="24" fill="#bdbdbd"/><circle cx="24.400" cy="18.600" r="6.300" fill="#dce8fc"/><path d="M12 36.200C12 30.500 17 27.500 24.400 27.500S36.800 30.500 36.800 36.200Z" fill="#dce8fc"/></svg><span style="position:absolute;left:1760.50px;top:870.20px;font-size:29px;line-height:36px;letter-spacing:-2.230px;color:#666;white-space:pre;">MARCELO</span><svg style="position:absolute;left:2319.2px;top:871.5px;overflow:visible;" width="40" height="36" viewBox="0 0 40 36" fill="none"><path d="M11.500 9.800C4.500 10.300 1.500 14.300 1.500 22.500C1.500 31.300 5 34.500 14 34.500H26C35 34.500 38.500 31.300 38.500 22.500C38.500 14.300 35.500 10.300 28.500 9.800" stroke="#666" stroke-width="3" stroke-linecap="round"/><path d="M20 1.500V24.500M12.800 17L20 24.500L27.200 17" stroke="#666" stroke-width="3" stroke-linecap="round" stroke-linejoin="miter"/></svg><svg style="position:absolute;left:2400.9px;top:873.4px;overflow:visible;" width="8" height="32" viewBox="0 0 8 32" fill="none"><circle cx="4" cy="4" r="3.900" fill="#666"/><circle cx="4" cy="16" r="3.900" fill="#666"/><circle cx="4" cy="28" r="3.900" fill="#666"/></svg><div style="position:absolute;left:1688px;top:953.5px;width:764.500px;height:560px;background:#fff;border-radius:8px"></div><span style="position:absolute;left:1704.00px;top:972.40px;font-size:32px;line-height:40px;letter-spacing:-0.897px;color:#4886ee;white-space:pre;">OS-2273</span><span style="position:absolute;left:1704.00px;top:1019.60px;font-size:26px;line-height:32px;letter-spacing:-0.236px;color:#666;white-space:pre;">Created by Ramon Toro</span><div style="position:absolute;left:1704px;top:1065.5px;width:732.5px;height:104px;background:#f7f7f7;border-radius:8px;"></div><span style="position:absolute;left:1717.00px;top:1081.20px;font-size:28px;line-height:35px;letter-spacing:-0.922px;color:#000;font-weight:bold;white-space:pre;">Asset:</span><span style="position:absolute;left:1800.40px;top:1081.20px;font-size:28px;line-height:35px;letter-spacing:0.040px;color:#000;white-space:pre;">Equipo Imene  { I-001 }</span><div style="position:absolute;left:1704px;top:1185.5px;width:732.5px;height:72px;background:#f7f7f7;border-radius:8px;"></div><span style="position:absolute;left:1720.50px;top:1201.50px;font-size:28px;line-height:35px;letter-spacing:-0.713px;color:#000;font-weight:bold;white-space:pre;">Task:</span><span style="position:absolute;left:1791.50px;top:1201.50px;font-size:28px;line-height:35px;letter-spacing:0.560px;color:#000;white-space:pre;">Mantenimiento semanal</span><div style="position:absolute;left:2385.5px;top:1201.5px;width:40px;height:40px;background:#fff;border-radius:8px;"></div><svg style="position:absolute;left:2385.5px;top:1201.5px;overflow:visible;" width="40" height="40" viewBox="0 0 40 40" fill="none"><path d="M12.500 15.800H27.500M12.500 25H27.500" stroke="#f0962e" stroke-width="3" stroke-linecap="round"/></svg><div style="position:absolute;left:1704px;top:1273.5px;width:625.5px;height:8px;background:#22c55e;border-radius:4px;"></div><span style="position:absolute;right:72.61px;top:1263.20px;font-size:24px;line-height:30px;letter-spacing:-0.609px;color:#000;font-weight:bold;white-space:pre;">100 %</span><div style="position:absolute;left:1704px;top:1297.5px;width:131.5px;height:48px;background:#f7f7f7;border-radius:8px;"></div><svg style="position:absolute;left:1720.7px;top:1308.1px;overflow:visible;" width="24" height="27" viewBox="0 0 24 27" fill="none"><circle cx="12" cy="15" r="11" stroke="#666" stroke-width="2"/><path d="M8 1H16" stroke="#666" stroke-width="2" stroke-linecap="round"/><path d="M12 9.300V16.300" stroke="#666" stroke-width="2" stroke-linecap="round"/></svg><span style="position:absolute;left:1764.70px;top:1307.60px;font-size:23px;line-height:29px;letter-spacing:0.334px;color:#666;font-weight:bold;white-space:pre;">00:10</span><div style="position:absolute;left:1843.5px;top:1297.5px;width:193.5px;height:48px;background:#f7f7f7;border-radius:8px;"></div><svg style="position:absolute;left:1859.3px;top:1307.5px;overflow:visible;" width="26" height="29" viewBox="0 0 26 29" fill="none"><rect x="1" y="3.800" width="24" height="24.200" rx="6.500" stroke="#666" stroke-width="2"/><path d="M7.700 .8V5.800M18.300 .8V5.800" stroke="#666" stroke-width="2" stroke-linecap="round"/><path d="M1 10.200H25" stroke="#666" stroke-width="2"/><circle cx="7.5" cy="17.2" r="1.350" fill="#666"/><circle cx="13" cy="17.2" r="1.350" fill="#666"/><circle cx="18.5" cy="17.2" r="1.350" fill="#666"/><circle cx="7.5" cy="21.4" r="1.350" fill="#666"/><circle cx="13" cy="21.4" r="1.350" fill="#666"/><circle cx="18.5" cy="21.4" r="1.350" fill="#666"/></svg><span style="position:absolute;left:1904.30px;top:1306.00px;font-size:23px;line-height:29px;letter-spacing:0.591px;color:#666;font-weight:bold;white-space:pre;">2025-11-07</span><div style="position:absolute;left:1688px;top:1414.5px;width:764.5px;height:11px;background:linear-gradient(to bottom,rgba(0,0,0,0),rgba(0,0,0,0.012) 40%,rgba(0,0,0,0.048))"></div><div style="position:absolute;left:1704px;top:1443.0px;width:48px;height:48px;border-radius:50%;background:#4886ee"></div><span style="position:absolute;left:1710.78px;top:1450.40px;font-size:27px;line-height:34px;letter-spacing:-0.797px;color:#fff;white-space:pre;">AB</span><span style="position:absolute;left:1760.50px;top:1448.70px;font-size:28px;line-height:35px;letter-spacing:0.018px;color:#666;white-space:pre;">Antônio Barbosa</span><svg style="position:absolute;left:2319.2px;top:1449.0px;overflow:visible;" width="40" height="36" viewBox="0 0 40 36" fill="none"><path d="M11.500 9.800C4.500 10.300 1.500 14.300 1.500 22.500C1.500 31.300 5 34.500 14 34.500H26C35 34.500 38.500 31.300 38.500 22.500C38.500 14.300 35.500 10.300 28.500 9.800" stroke="#666" stroke-width="3" stroke-linecap="round"/><path d="M20 1.500V24.500M12.800 17L20 24.500L27.200 17" stroke="#666" stroke-width="3" stroke-linecap="round" stroke-linejoin="miter"/></svg><svg style="position:absolute;left:2400.9px;top:1450.9px;overflow:visible;" width="8" height="32" viewBox="0 0 8 32" fill="none"><circle cx="4" cy="4" r="3.900" fill="#666"/><circle cx="4" cy="16" r="3.900" fill="#666"/><circle cx="4" cy="28" r="3.900" fill="#666"/></svg><div style="position:absolute;left:1688px;top:1531.5px;width:764.500px;height:560px;background:#fff;border-radius:8px"></div><span style="position:absolute;left:1704.00px;top:1550.40px;font-size:32px;line-height:40px;letter-spacing:-0.897px;color:#4886ee;white-space:pre;">OS-2106</span><span style="position:absolute;left:1704.00px;top:1597.60px;font-size:26px;line-height:32px;letter-spacing:-0.154px;color:#666;white-space:pre;">Created by Jonas Campos</span><div style="position:absolute;left:1704px;top:1643.5px;width:732.5px;height:104px;background:#f7f7f7;border-radius:8px;"></div><span style="position:absolute;left:1717.00px;top:1659.20px;font-size:28px;line-height:35px;letter-spacing:-0.922px;color:#000;font-weight:bold;white-space:pre;">Asset:</span><span style="position:absolute;left:1800.40px;top:1659.20px;font-size:28px;line-height:35px;letter-spacing:-1.218px;color:#000;white-space:pre;">-</span><div style="position:absolute;left:1704px;top:1763.5px;width:732.5px;height:72px;background:#f7f7f7;border-radius:8px;"></div><span style="position:absolute;left:1720.50px;top:1779.50px;font-size:28px;line-height:35px;letter-spacing:-0.713px;color:#000;font-weight:bold;white-space:pre;">Task:</span><span style="position:absolute;left:1791.50px;top:1779.50px;font-size:28px;line-height:35px;letter-spacing:-1.218px;color:#000;white-space:pre;">-</span><div style="position:absolute;left:2385.5px;top:1779.5px;width:40px;height:40px;background:#fff;border-radius:8px;"></div><svg style="position:absolute;left:2385.5px;top:1779.5px;overflow:visible;" width="40" height="40" viewBox="0 0 40 40" fill="none"><path d="M12.500 15.800H27.500M12.500 25H27.500" stroke="#f0962e" stroke-width="3" stroke-linecap="round"/></svg><div style="position:absolute;left:1704px;top:1851.5px;width:651px;height:8px;background:#ebebeb;border-radius:4px;"></div><span style="position:absolute;right:73.29px;top:1841.20px;font-size:24px;line-height:30px;letter-spacing:-1.292px;color:#000;font-weight:bold;white-space:pre;">0 %</span><div style="position:absolute;left:1704px;top:1875.5px;width:131.5px;height:48px;background:#f7f7f7;border-radius:8px;"></div><svg style="position:absolute;left:1720.7px;top:1886.1px;overflow:visible;" width="24" height="27" viewBox="0 0 24 27" fill="none"><circle cx="12" cy="15" r="11" stroke="#666" stroke-width="2"/><path d="M8 1H16" stroke="#666" stroke-width="2" stroke-linecap="round"/><path d="M12 9.300V16.300" stroke="#666" stroke-width="2" stroke-linecap="round"/></svg><span style="position:absolute;left:1764.70px;top:1885.60px;font-size:23px;line-height:29px;letter-spacing:0.334px;color:#666;font-weight:bold;white-space:pre;">00:10</span><div style="position:absolute;left:1843.5px;top:1875.5px;width:193.5px;height:48px;background:#f7f7f7;border-radius:8px;"></div><svg style="position:absolute;left:1859.3px;top:1885.5px;overflow:visible;" width="26" height="29" viewBox="0 0 26 29" fill="none"><rect x="1" y="3.800" width="24" height="24.200" rx="6.500" stroke="#666" stroke-width="2"/><path d="M7.700 .8V5.800M18.300 .8V5.800" stroke="#666" stroke-width="2" stroke-linecap="round"/><path d="M1 10.200H25" stroke="#666" stroke-width="2"/><circle cx="7.5" cy="17.2" r="1.350" fill="#666"/><circle cx="13" cy="17.2" r="1.350" fill="#666"/><circle cx="18.5" cy="17.2" r="1.350" fill="#666"/><circle cx="7.5" cy="21.4" r="1.350" fill="#666"/><circle cx="13" cy="21.4" r="1.350" fill="#666"/><circle cx="18.5" cy="21.4" r="1.350" fill="#666"/></svg><span style="position:absolute;left:1904.30px;top:1884.00px;font-size:23px;line-height:29px;letter-spacing:0.591px;color:#666;font-weight:bold;white-space:pre;">2025-11-30</span><div style="position:absolute;left:1688px;top:1992.5px;width:764.5px;height:11px;background:linear-gradient(to bottom,rgba(0,0,0,0),rgba(0,0,0,0.012) 40%,rgba(0,0,0,0.048))"></div><svg style="position:absolute;left:1704px;top:2021.0px;overflow:visible;" width="48" height="48" viewBox="0 0 48 48" fill="none"><circle cx="24" cy="24" r="24" fill="#bdbdbd"/><circle cx="24.400" cy="18.600" r="6.300" fill="#dce8fc"/><path d="M12 36.200C12 30.500 17 27.500 24.400 27.500S36.800 30.500 36.800 36.200Z" fill="#dce8fc"/></svg><span style="position:absolute;left:1760.50px;top:2026.70px;font-size:28px;line-height:35px;letter-spacing:-1.578px;color:#666;white-space:pre;">-</span><svg style="position:absolute;left:2319.2px;top:2027.0px;overflow:visible;" width="40" height="36" viewBox="0 0 40 36" fill="none"><path d="M11.500 9.800C4.500 10.300 1.500 14.300 1.500 22.500C1.500 31.300 5 34.500 14 34.500H26C35 34.500 38.500 31.300 38.500 22.500C38.500 14.300 35.500 10.300 28.500 9.800" stroke="#666" stroke-width="3" stroke-linecap="round"/><path d="M20 1.500V24.500M12.800 17L20 24.500L27.200 17" stroke="#666" stroke-width="3" stroke-linecap="round" stroke-linejoin="miter"/></svg><svg style="position:absolute;left:2400.9px;top:2028.9px;overflow:visible;" width="8" height="32" viewBox="0 0 8 32" fill="none"><circle cx="4" cy="4" r="3.900" fill="#666"/><circle cx="4" cy="16" r="3.900" fill="#666"/><circle cx="4" cy="28" r="3.900" fill="#666"/></svg><div style="position:absolute;left:821px;top:376px;width:11px;height:75px;border:1.500px solid rgba(255,255,255,0.22);border-radius:7px"></div><div style="position:absolute;left:1637px;top:376px;width:11px;height:94px;border:1.500px solid rgba(255,255,255,0.22);border-radius:7px"></div><div style="position:absolute;left:2453px;top:376px;width:11px;height:202px;border:1.500px solid rgba(255,255,255,0.22);border-radius:7px"></div></div><div style="position:absolute;left:870px;top:359px;width:772.500px;height:588px;border:4px solid #ff0000"></div><div style="position:absolute;left:0px;top:0px;width:2508px;height:128px;background:#fff;border-radius:0px;"></div><div style="position:absolute;left:38px;top:50.4px;width:36px;height:4.8px;background:#4886ee;border-radius:2.4px;"></div><div style="position:absolute;left:38px;top:62.1px;width:36px;height:4.8px;background:#4886ee;border-radius:2.4px;"></div><div style="position:absolute;left:38px;top:73.8px;width:36px;height:4.8px;background:#4886ee;border-radius:2.4px;"></div><span style="position:absolute;left:104.70px;top:29.30px;font-size:28px;line-height:35px;letter-spacing:0.431px;color:#6b6b6b;white-space:pre;">Work Management</span><span style="position:absolute;left:104.70px;top:62.90px;font-size:32px;line-height:40px;letter-spacing:-0.244px;color:#000;white-space:pre;">View Kanban</span><div style="position:absolute;left:1845px;top:24px;width:80px;height:80px;background:#edf3fe;border-radius:40px;"></div><div style="position:absolute;left:1941px;top:24px;width:80px;height:80px;background:#edf3fe;border-radius:40px;"></div><div style="position:absolute;left:2037px;top:24px;width:80px;height:80px;background:#edf3fe;border-radius:40px;"></div><svg style="position:absolute;left:1869.9px;top:45.9px;overflow:visible;" width="30.2" height="38.4" viewBox="0 0 30.2 38.4" fill="none"><path d="M15.1 0c-1.3 0-2.4.7-3.2 1.6C7.2 3.6 3.9 7.6 3.9 12.8v5.6c0 2.6-1.4 4.5-2.9 6.6c-1.6 2.3-.5 4.8 2.1 5.5 3.5 1 7.4 1.6 12 1.6s8.500-.6 12-1.600c2.600-.7 3.700-3.200 2.100-5.500c-1.500-2.100-2.900-4-2.900-6.600v-5.600c0-5.200-3.300-9.200-8-11.200C17.500.7 16.400 0 15.100 0z" fill="#4886ee"/><path d="M9.400 33.500Q15.100 35.300 20.800 33.500C20.200 36.700 17.900 38.400 15.100 38.400S10 36.700 9.400 33.500Z" fill="#4886ee"/></svg><svg style="position:absolute;left:1941px;top:24px;overflow:visible;" width="80" height="80" viewBox="0 0 80 80" fill="none"><path d="M29 40.700 L24 39.600 C22.100 39.200 21.600 37.700 22.800 36.400 L29.800 29 C30.600 28.100 31.600 27.900 32.700 28.200 L40.500 29.900 Z" fill="#a9c6f8"/><path d="M40.300 52.700 L51.700 42 L53.900 49.400 C54.200 50.500 54 51.400 53.200 52.200 L46 59.300 C44.700 60.500 43.200 60.100 42.700 58.400 Z" fill="#a9c6f8"/><path d="M23.800 58.400 C23.500 53.800 25.200 49.600 28.300 48.200 C31.700 46.700 35.600 49.400 35.200 53.300 C34.800 56.800 30.500 58.500 23.800 58.400 Z" fill="#a9c6f8"/><path d="M29 40.700 L45.500 25.200 C49.500 21.900 54.300 21.200 58.500 21.900 C59.900 22.100 60.500 22.700 60.600 24 C61 28 60 32.800 56.600 36.600 L40.300 52.700 Z" fill="#4886ee"/><circle cx="50.1" cy="31.300" r="5" fill="#a9c6f8"/></svg><svg style="position:absolute;left:2037px;top:24px;overflow:visible;" width="80" height="80" viewBox="0 0 80 80" fill="none"><path d="M30.700 21.800H49.200a6 6 0 0 1 6 6V52a6 6 0 0 1-6 6H30.700a6 6 0 0 1-6-6V27.800a6 6 0 0 1 6-6z" fill="#a9c6f8"/><path d="M30.200 45.700H55.200V52.500a5.500 5.500 0 0 1-5.500 5.500H30.200a5.500 5.500 0 0 1-5.500-5.500V51.200a5.500 5.500 0 0 1 5.500-5.500z" fill="#4886ee"/><rect x="31.200" y="29.700" width="17.100" height="2.400" rx="1.200" fill="#4886ee"/><rect x="31.200" y="36" width="12" height="2.400" rx="1.200" fill="#4886ee"/></svg><div style="position:absolute;left:2133px;top:24px;width:150px;height:80px;border-radius:40px;background:linear-gradient(106deg,#0046c3 0%,#0049c7 24%,#0085dd 60%,#00c8ff 97%)"></div><svg style="position:absolute;left:0px;top:0px;overflow:visible;" width="2508" height="128" viewBox="0 0 2508 128" fill="none"><path d="M2186.5 47.400000000000006 Q2189.128 59.044000000000004 2201.1 61.6 Q2189.128 64.156 2186.5 75.8 Q2183.872 64.156 2171.9 61.6 Q2183.872 59.044000000000004 2186.5 47.400000000000006ZM2170 68.5 Q2171.332 74.486 2177.4 75.8 Q2171.332 77.11399999999999 2170 83.1 Q2168.668 77.11399999999999 2162.6 75.8 Q2168.668 74.486 2170 68.5ZM2167.8 49.4 Q2168.52 52.68 2171.8 53.4 Q2168.52 54.12 2167.8 57.4 Q2167.0800000000004 54.12 2163.8 53.4 Q2167.0800000000004 52.68 2167.8 49.4Z" fill="#fff"/></svg><span style="position:absolute;left:2221.70px;top:43.30px;font-size:32px;line-height:40px;letter-spacing:-0.328px;color:#fff;white-space:pre;">AI</span><div style="position:absolute;left:2315px;top:24px;width:2px;height:80px;background:#e6e6e6;border-radius:0px;"></div><div style="position:absolute;left:2333px;top:24px;width:80px;height:80px;background:#4886ee;border-radius:40px;"></div><span style="position:absolute;left:2352.55px;top:39.40px;font-size:36px;line-height:45px;letter-spacing:-1.555px;color:#e8effd;white-space:pre;">JC</span><svg style="position:absolute;left:2424px;top:56px;overflow:visible;" width="24" height="18" viewBox="0 0 24 18" fill="none"><path d="M5.200 5L12.700 12.300L20.200 5" stroke="#4886ee" stroke-width="3" stroke-linecap="round" stroke-linejoin="miter"/></svg><div style="position:absolute;left:48px;top:168px;width:320px;height:80px;border-radius:40px;background:#fff;overflow:hidden"><div style="position:absolute;left:0;top:0;width:80px;height:80px;background:#4886ee"></div><div style="position:absolute;left:157.700px;top:0;width:2px;height:80px;background:#e6eefd"></div><div style="position:absolute;left:238px;top:0;width:2px;height:80px;background:#e6eefd"></div></div><svg style="position:absolute;left:67px;top:189px;overflow:visible;" width="42" height="38" viewBox="0 0 42 38" fill="none"><rect x="2.3" y="2.600" width="8.600" height="33.200" rx="2.500" stroke="#fff" stroke-width="2.600"/><rect x="16.7" y="2.600" width="8.600" height="33.200" rx="2.500" stroke="#fff" stroke-width="2.600"/><rect x="31.1" y="2.600" width="8.600" height="33.200" rx="2.500" stroke="#fff" stroke-width="2.600"/></svg><svg style="position:absolute;left:148.5px;top:186.5px;overflow:visible;" width="40" height="44" viewBox="0 0 40 44" fill="none"><rect x="1.500" y="5.800" width="36.300" height="36.400" rx="10" stroke="#4886ee" stroke-width="3"/><path d="M11.600 1.500V8.700M27.400 1.500V8.700" stroke="#4886ee" stroke-width="3" stroke-linecap="round"/><path d="M1.500 15.700H37.800" stroke="#4886ee" stroke-width="3"/><circle cx="11.8" cy="25.3" r="2.050" fill="#4886ee"/><circle cx="19.6" cy="25.3" r="2.050" fill="#4886ee"/><circle cx="27.2" cy="25.3" r="2.050" fill="#4886ee"/><circle cx="11.8" cy="31.4" r="2.050" fill="#4886ee"/><circle cx="19.6" cy="31.4" r="2.050" fill="#4886ee"/><circle cx="27.2" cy="31.4" r="2.050" fill="#4886ee"/></svg><svg style="position:absolute;left:227.5px;top:189.7px;overflow:visible;" width="41" height="38" viewBox="0 0 41 38" fill="none"><path d="M1.7 6.8999999999999995L4.7 9.6L10.2 2.9999999999999996" stroke="#4886ee" stroke-width="3" stroke-linecap="round" stroke-linejoin="round"/><path d="M1.7 21.0L4.7 23.7L10.2 17.099999999999998" stroke="#4886ee" stroke-width="3" stroke-linecap="round" stroke-linejoin="round"/><path d="M1.7 35.099999999999994L4.7 37.8L10.2 31.199999999999996" stroke="#4886ee" stroke-width="3" stroke-linecap="round" stroke-linejoin="round"/><path d="M18.500 5.600H38.500M18.500 19.700H29.500M36 19.700H38.500M18.500 33.800H38.500" stroke="#4886ee" stroke-width="3" stroke-linecap="round"/></svg><svg style="position:absolute;left:310px;top:185.8px;overflow:visible;" width="35" height="44" viewBox="0 0 35 44" fill="none"><path d="M9.600 6H8.700A7.200 7.200 0 0 0 1.500 13.200V34.300A7.200 7.200 0 0 0 8.700 41.500H26.300A7.200 7.200 0 0 0 33.500 34.300V13.200A7.200 7.200 0 0 0 26.300 6H25.400" stroke="#4886ee" stroke-width="3"/><rect x="9.600" y="1.500" width="15.800" height="9" rx="4.500" stroke="#4886ee" stroke-width="3"/><path d="M9.700 23.600H17.500M9.700 31.500H25.500" stroke="#4886ee" stroke-width="3" stroke-linecap="round"/></svg><svg style="position:absolute;left:404px;top:188px;overflow:visible;" width="40" height="40" viewBox="0 0 40 40" fill="none"><circle cx="20" cy="19.800" r="18.200" stroke="#4886ee" stroke-width="3"/><circle cx="20" cy="12.900" r="1.900" fill="#4886ee"/><path d="M20 18.800V27.600" stroke="#4886ee" stroke-width="3" stroke-linecap="round"/></svg><svg style="position:absolute;left:2400px;top:196px;overflow:visible;" width="42" height="27" viewBox="0 0 42 27" fill="none"><path d="M2.200 3.500H8.400M16.400 3.500H38.500M8.400 13.500H32.400M16.400 23.500H24.500" stroke="#3f80ea" stroke-width="3" stroke-linecap="round"/></svg><div style="position:absolute;left:2333px;top:1447px;width:112px;height:112px;border-radius:50%;background:#105bdb;box-shadow:0 6px 10px -2px rgba(0,0,0,0.2),0 12px 20px 0 rgba(0,0,0,0.14),0 2px 36px 0 rgba(0,0,0,0.12)"></div><svg style="position:absolute;left:2376.4px;top:1489.8px;overflow:visible;" width="24.4" height="24.4" viewBox="0 0 24.4 24.4" fill="none"><path d="M12.200 0V24.400M0 12.200H24.400" stroke="#fff" stroke-width="4.200"/></svg><div style="position:absolute;left:33px;top:1577.500px;width:1831px;height:12.500px;overflow:hidden"><div style="position:absolute;left:0;top:0;width:1831px;height:12.500px;background:#7f838e;border-radius:4px 6.500px 6.500px 12.500px / 3px 6.300px 6.300px 12.500px"></div></div>
</body></html>
